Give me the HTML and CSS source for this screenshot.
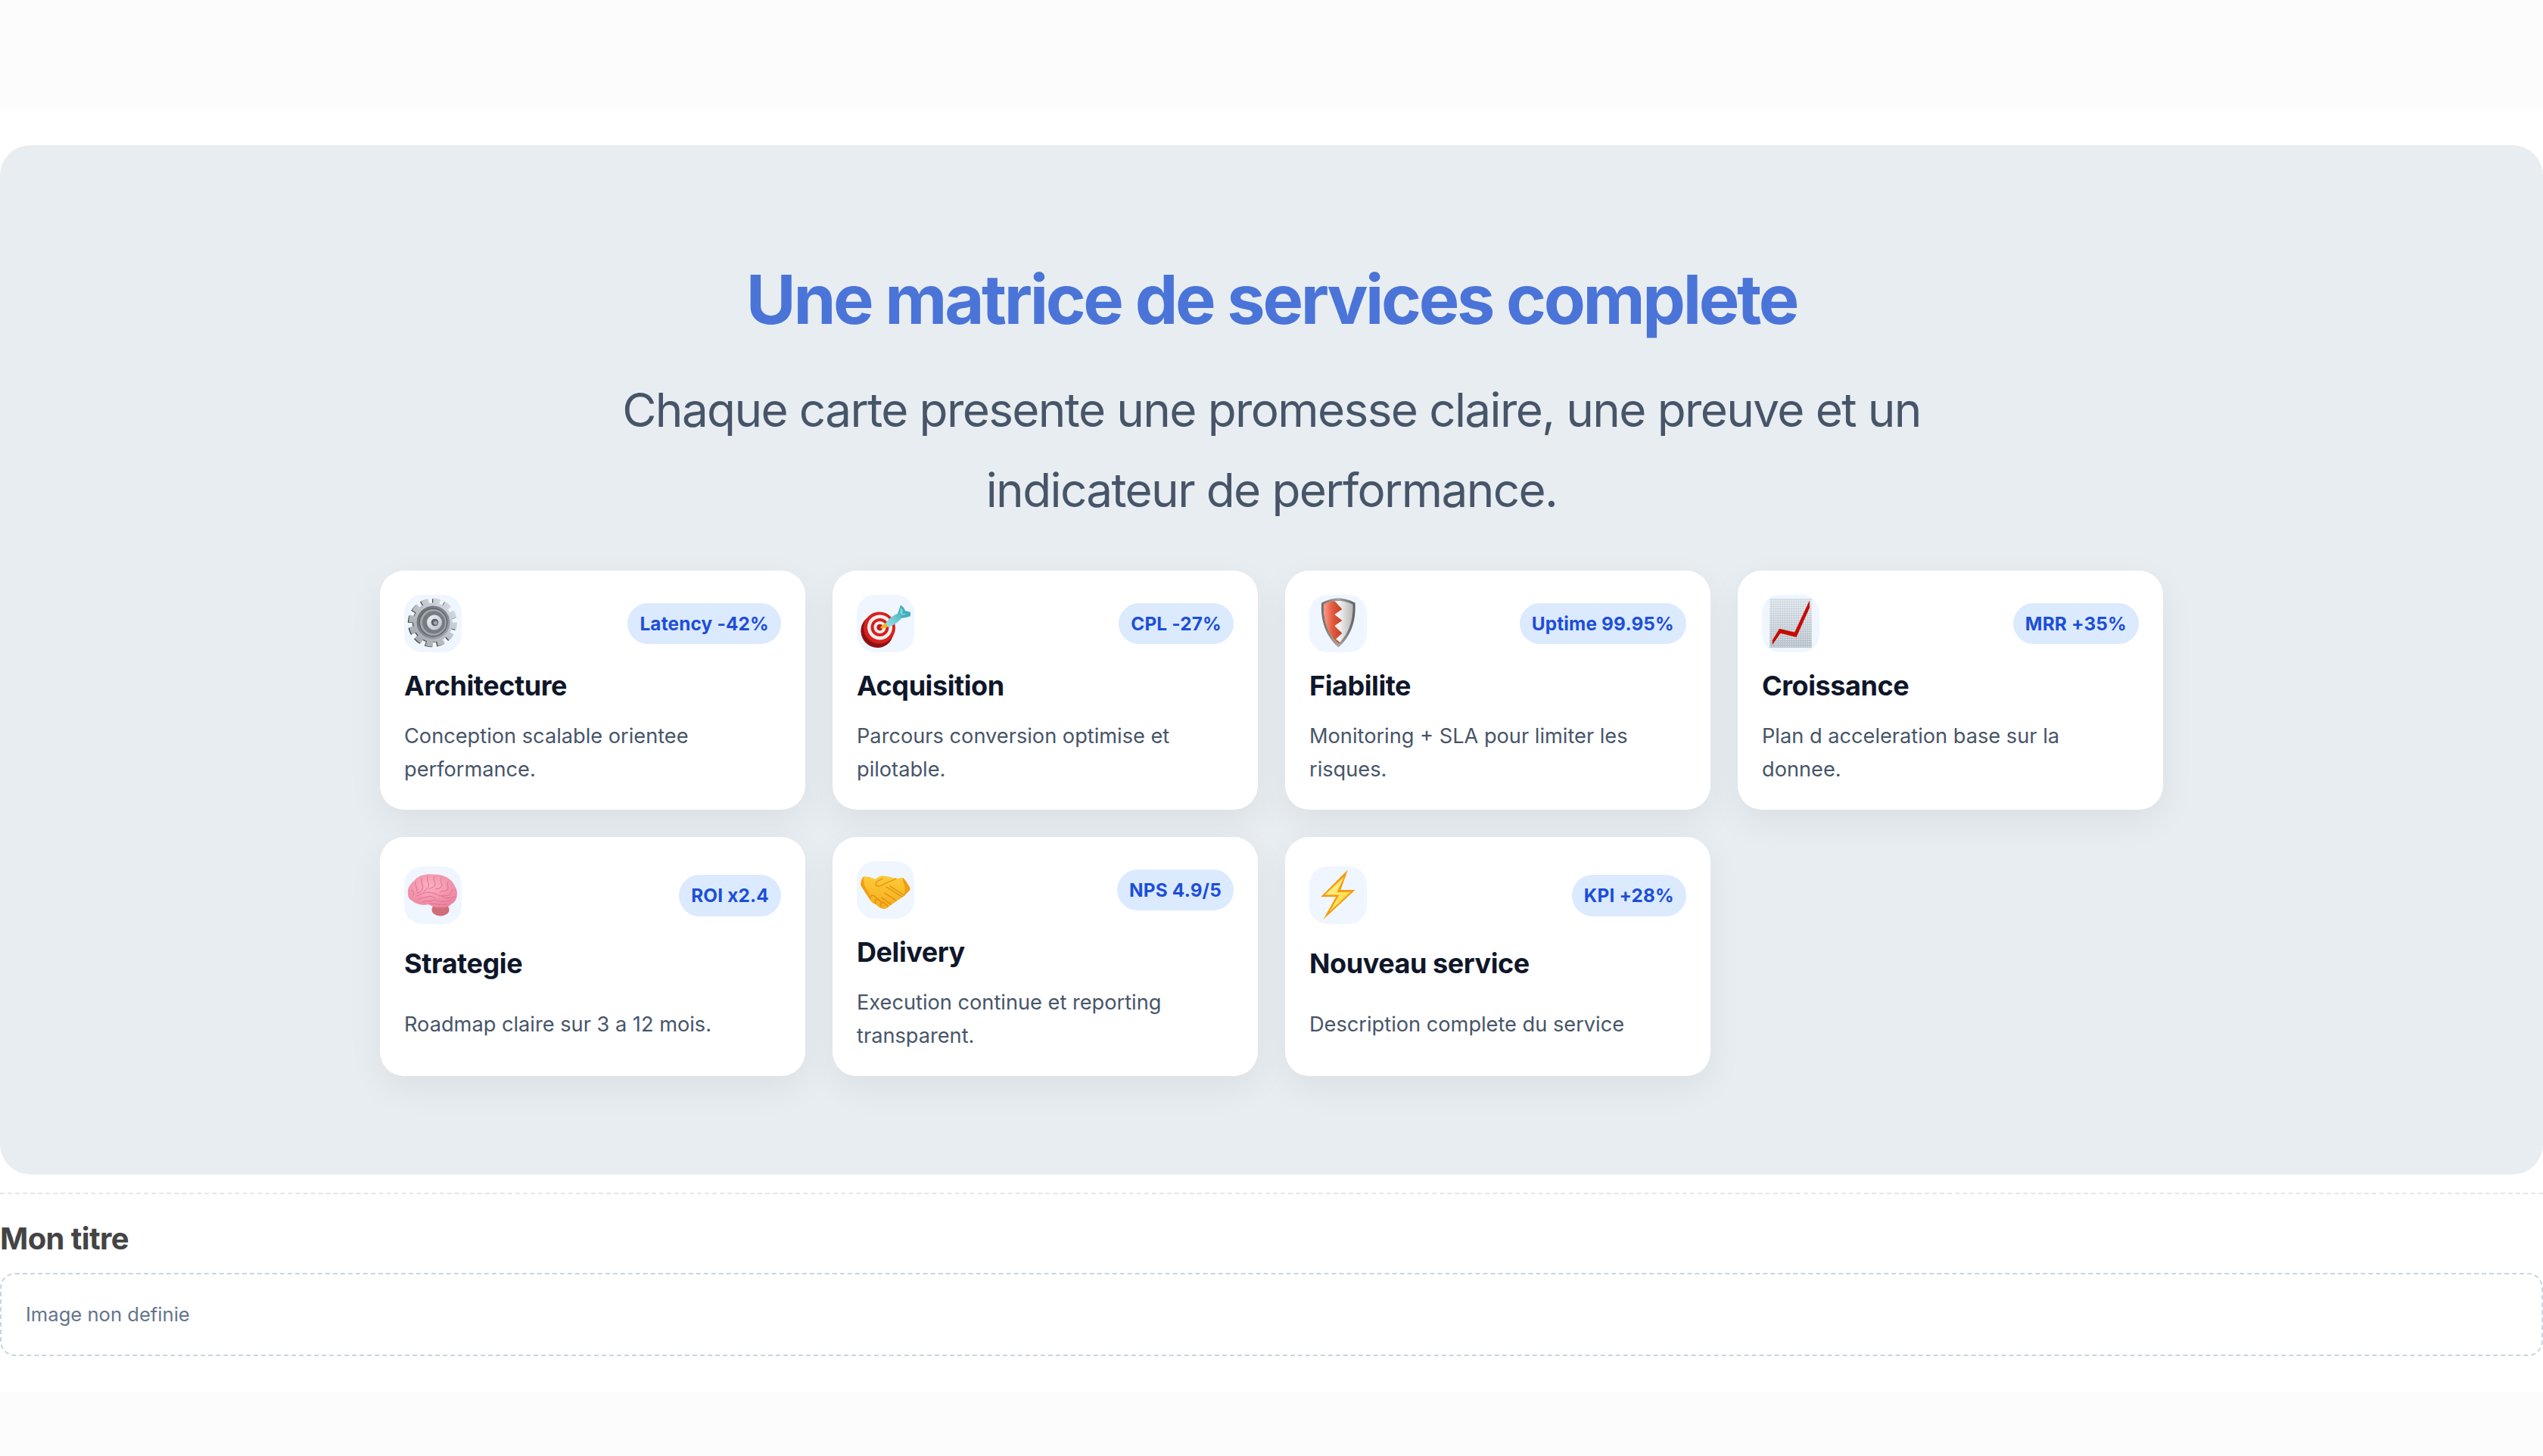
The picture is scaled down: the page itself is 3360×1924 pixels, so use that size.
FILE: index.html
```html
<!DOCTYPE html>
<html lang="fr">
<head>
<meta charset="utf-8">
<title>Une matrice de services complete</title>
<link rel="stylesheet" href="styles.css">
</head>
<body>
<header class="topbar"></header>
<main class="main">
  <section class="hero">
    <h1 class="hero-title">Une matrice de services complete</h1>
    <p class="hero-sub">Chaque carte presente une promesse claire, une preuve et un indicateur de performance.</p>
    <div class="grid">
      <article class="card">
        <div class="card-head">
          <span class="icon"><svg viewBox="0 0 76 76" width="76" height="76">
            <defs>
              <linearGradient id="gearBody" x1="1" y1="0" x2="0" y2="1"><stop offset="0" stop-color="#d8dee3"/><stop offset="1" stop-color="#9fa7ae"/></linearGradient>
              <linearGradient id="gearRing" x1="0" y1="0" x2="1" y2="1"><stop offset="0" stop-color="#666b71"/><stop offset="1" stop-color="#a3a8ad"/></linearGradient>
              <linearGradient id="gearHub" x1="0" y1="0" x2="1" y2="1"><stop offset="0" stop-color="#f2f5f8"/><stop offset="1" stop-color="#b5c0ca"/></linearGradient>
            </defs>
            <g transform="translate(-1.2 .7)"><circle cx="38" cy="36.5" r="26" fill="#4f473e"/><circle cx="38" cy="36.5" r="28" fill="none" stroke="#4f473e" stroke-width="8" stroke-dasharray="8.8 5.86"/></g>
            <circle cx="38" cy="36.5" r="26" fill="url(#gearBody)"/>
            <circle cx="38" cy="36.5" r="28" fill="none" stroke="url(#gearBody)" stroke-width="8" stroke-dasharray="8.8 5.86"/>
            <circle cx="38.5" cy="36.5" r="22" fill="url(#gearRing)"/>
            <circle cx="38.5" cy="36.5" r="19" fill="#5f6469"/>
            <circle cx="38.5" cy="36.5" r="17.5" fill="#a1a6ab"/>
            <circle cx="39" cy="36.5" r="15" fill="#777c81"/>
            <circle cx="40" cy="36.5" r="10" fill="url(#gearHub)"/>
            <circle cx="40.5" cy="36.5" r="4.8" fill="#5c6166"/>
            <circle cx="41.5" cy="37" r="2.6" fill="#a0a5aa"/>
          </svg></span>
          <span class="pill">Latency -42%</span>
        </div>
        <h3 class="card-title">Architecture</h3>
        <p class="card-text">Conception scalable orientee performance.</p>
      </article>
      <article class="card">
        <div class="card-head">
          <span class="icon"><svg viewBox="0 0 76 76" width="76" height="76">
            <defs>
              <linearGradient id="dartBody" x1="0" y1="1" x2="1" y2="0"><stop offset="0" stop-color="#9ce6ea"/><stop offset="1" stop-color="#4cb5c0"/></linearGradient>
            </defs>
            <ellipse cx="27" cy="48" rx="21.5" ry="22" fill="#8f0f12" transform="rotate(-25 27 48)"/>
            <circle cx="30" cy="43.5" r="21" fill="#d8201f"/>
            <circle cx="30.5" cy="43" r="16.5" fill="#f4f1ee"/>
            <circle cx="30.5" cy="43" r="12" fill="#d8201f"/>
            <circle cx="30.5" cy="43" r="8" fill="#f4f1ee"/>
            <circle cx="30.5" cy="43" r="4.2" fill="#c4171a"/>
            <path d="M31 43 L38 37 L42 42 L33 45 Z" fill="#f2b515"/>
            <path d="M54 25 L58 13.5 C61 15 63 18 64 21 L71 23 L71 28 C67 30 62 30 58 31 Z" fill="#43aebb"/>
            <path d="M38 38 C42 31 50 26 56 24 C59 26 60 29 59 31 C54 37 47 41 42 43 Z" fill="url(#dartBody)"/>
            <path d="M58 17 L61 20 L60 25 L67 25 L60 27 L57 24 Z" fill="#7fd5dc"/>
          </svg></span>
          <span class="pill">CPL -27%</span>
        </div>
        <h3 class="card-title">Acquisition</h3>
        <p class="card-text">Parcours conversion optimise et pilotable.</p>
      </article>
      <article class="card">
        <div class="card-head">
          <span class="icon"><svg viewBox="0 0 76 76" width="76" height="76">
            <defs>
              <linearGradient id="shieldEdge" x1="0" y1="0" x2="1" y2="0"><stop offset="0" stop-color="#6e6e6e"/><stop offset=".5" stop-color="#a5a5a5"/><stop offset="1" stop-color="#5f5f5f"/></linearGradient>
              <linearGradient id="shieldRed" x1="0" y1="0" x2="1" y2="0"><stop offset="0" stop-color="#ff9a87"/><stop offset=".5" stop-color="#e0583c"/><stop offset="1" stop-color="#bf4128"/></linearGradient>
              <linearGradient id="shieldLight" x1="0" y1="0" x2="1" y2="0"><stop offset="0" stop-color="#c9c9c9"/><stop offset=".5" stop-color="#f5f5f5"/><stop offset="1" stop-color="#b7b7b7"/></linearGradient>
            </defs>
            <path d="M38.3 4.5 C45 4.5 54 7 60.5 10.8 C61.5 30 58 52 38.3 69.5 C19 52 15 30 16 10.8 C22.5 7 31 4.5 38.3 4.5 Z" fill="url(#shieldEdge)"/>
            <path d="M38.3 8 C45 8 52 9.8 57.5 12.8 C58 30 54.5 49 38.3 64.5 C22 49 18.5 30 19 12.8 C24.5 9.8 31 8 38.3 8 Z" fill="url(#shieldLight)"/>
            <path d="M33.5 8.3 L43.3 19 L33.3 26 L43.3 34 L33.3 41 L43.3 50.7 L35 58.5 L40.5 63 L38.3 64.5 C22 49 18.5 30 19 12.8 C23.5 10.3 28.5 8.8 33.5 8.3 Z" fill="url(#shieldRed)"/>
          </svg></span>
          <span class="pill">Uptime 99.95%</span>
        </div>
        <h3 class="card-title">Fiabilite</h3>
        <p class="card-text">Monitoring + SLA pour limiter les risques.</p>
      </article>
      <article class="card">
        <div class="card-head">
          <span class="icon"><svg viewBox="0 0 76 76" width="76" height="76">
            <defs>
              <pattern id="chartGrid" width="3" height="3" patternUnits="userSpaceOnUse"><rect width="3" height="3" fill="#e9edf1"/><path d="M0 .5H3M.5 0V3" stroke="#bccbd8" stroke-width="1"/></pattern>
              <linearGradient id="chartFade" x1="0" y1="0" x2="0" y2="1"><stop offset="0" stop-color="#fff" stop-opacity=".25"/><stop offset="1" stop-color="#8f979e" stop-opacity=".3"/></linearGradient>
            </defs>
            <rect x="10" y="4.7" width="56" height="65" fill="url(#chartGrid)"/>
            <rect x="10" y="4.7" width="56" height="65" fill="url(#chartFade)"/>
            <path d="M13.8 60 L23 44.8 L43.2 49.5 L62.8 7.5 L63 17 L45.5 56 L24.5 50.8 L13.8 66 Z" fill="#c70b00"/>
          </svg></span>
          <span class="pill">MRR +35%</span>
        </div>
        <h3 class="card-title">Croissance</h3>
        <p class="card-text">Plan d acceleration base sur la donnee.</p>
      </article>
      <article class="card">
        <div class="card-head">
          <span class="icon"><svg viewBox="0 0 76 76" width="76" height="76">
            <defs>
              <radialGradient id="brainFill" cx=".45" cy=".35" r=".75"><stop offset="0" stop-color="#fbb0c2"/><stop offset="1" stop-color="#ec7f9b"/></radialGradient>
            </defs>
            <ellipse cx="48" cy="57" rx="11.5" ry="8.5" fill="#cf6d78"/>
            <path d="M5 35 C4 28 9 22 14 18 C19 11 30 9.5 38 10.5 C50 9.5 63 15 67 26 C72 33 71 46 62 50 C58 54 53 55 49 54 C44 55 38 54 33 50 C26 52 16 50 10 45 C6 43 5 39 5 35 Z" fill="url(#brainFill)"/>
            <g fill="none" stroke="#e06f8f" stroke-width="1" stroke-linecap="round">
              <path d="M15 20 C14 26 18 28 17 33"/>
              <path d="M23 15 C21 21 26 24 24 30 C23 33 20 35 17 35"/>
              <path d="M31 13 C29 19 34 22 32 27 C31 30 28 31 26 33"/>
              <path d="M40 13 C37 18 43 21 40 26 C38 28 35 28 33 30"/>
              <path d="M49 15 C46 20 52 23 49 27 C47 30 43 29 41 30"/>
              <path d="M58 20 C55 24 60 27 57 31 C54 33 50 32 47 34"/>
              <path d="M65 30 C61 32 63 37 59 38 C55 39 53 37 49 39"/>
              <path d="M17 39 C23 35 32 33 38 35 C44 37 48 39 54 41 C58 42 62 42 66 40"/>
              <path d="M18 44 C22 40 28 42 31 40 C34 38 38 41 41 42"/>
              <path d="M24 47 C29 44 33 47 37 45 C42 43 46 47 51 46 C55 46 58 47 61 45"/>
              <path d="M33 50 C38 48 42 50 46 50 C50 50 53 51 56 50"/>
              <path d="M9 32 C12 31 14 35 12 38"/>
            </g>
          </svg></span>
          <span class="pill">ROI x2.4</span>
        </div>
        <h3 class="card-title">Strategie</h3>
        <p class="card-text">Roadmap claire sur 3 a 12 mois.</p>
      </article>
      <article class="card">
        <div class="card-head">
          <span class="icon"><svg viewBox="0 0 76 76" width="76" height="76">
            <defs>
              <linearGradient id="handFill" x1="0" y1="0" x2="0" y2="1"><stop offset="0" stop-color="#fccb3a"/><stop offset="1" stop-color="#f6ab1c"/></linearGradient>
            </defs>
            <path d="M5.4 32 C5 27 7 22 9.6 20.3 C14 20 20 22 25 23.7 C28 21 31 19.3 34.4 19.3 C40 19.5 46 21.5 51.7 22.7 C54 23 58 22 61.2 22 C65 26 69 32 70.8 37 C68 41 64 44 61.2 46.9 C55 51 49 55 44 58.7 C41 62 37 63.5 34.4 62.7 C31 62 28 60 24.9 57 C21 56 18 53 17.2 50.3 C13 44 9 38 5.4 32 Z" fill="url(#handFill)"/>
            <g fill="none" stroke="#dc8f0e" stroke-width="1.3" stroke-linecap="round">
              <path d="M52 23 C46 26 40 28 33 32 C29 34 25 33 25 30 C25 27 29 25 34 23"/>
              <path d="M39 34 L60 47"/>
              <path d="M44 33 C50 37 56 41 63 45"/>
              <path d="M37 42 L52 52"/>
              <path d="M33 48 L45 57"/>
              <path d="M25 56 C23 52 26 49 29 51 L34 55"/>
              <path d="M32 60 C30 56 33 53 36 55 L41 59"/>
              <path d="M18 50 C17 46 20 44 23 46 L29 51"/>
            </g>
            <path d="M5.4 32 C5 27 7 22 9.6 20.3 C9 25 9 29 11 34 L17.2 44 L17.2 50.3 C13 44 9 38 5.4 32 Z" fill="#f39d12"/>
            <path d="M61.2 22 C65 26 69 32 70.8 37 C68 41 64 44 61.2 46.9 C63 42 65 38 63 32 C62 28 60 25 61.2 22 Z" fill="#f39d12"/>
          </svg></span>
          <span class="pill">NPS 4.9/5</span>
        </div>
        <h3 class="card-title">Delivery</h3>
        <p class="card-text">Execution continue et reporting transparent.</p>
      </article>
      <article class="card">
        <div class="card-head">
          <span class="icon"><svg viewBox="0 0 76 76" width="76" height="76">
            <defs>
              <linearGradient id="zapFill" x1="0" y1="0" x2="1" y2="1"><stop offset="0" stop-color="#fff8b0"/><stop offset="1" stop-color="#ffd21f"/></linearGradient>
            </defs>
            <path d="M50.9 4.3 L41.3 31 L60.5 31 L18.4 70 L35.2 40 L15.3 40 Z" fill="#f79a0c"/>
            <path d="M46 13.5 L36.5 34 L54.5 33.5 L26.5 60 L39.5 37.5 L20.5 37.5 Z" fill="url(#zapFill)"/>
          </svg></span>
          <span class="pill">KPI +28%</span>
        </div>
        <h3 class="card-title">Nouveau service</h3>
        <p class="card-text">Description complete du service</p>
      </article>
    </div>
  </section>
  <section class="media-block">
    <h2 class="media-title">Mon titre</h2>
    <div class="media-empty">Image non definie</div>
  </section>
</main>
<footer class="bottombar"></footer>
</body>
</html>
```

FILE: styles.css
```css
* { box-sizing: border-box; }
html, body { margin: 0; padding: 0; }
body {
  background: #ffffff;
  color: #0f172a;
  font-family: "Inter", "Liberation Sans", sans-serif;
  line-height: 1.6;
  min-height: 1924px;
  display: flex;
  flex-direction: column;
}
.topbar { height: 145px; background: #fcfcfc; }
.main { padding-top: 47px; flex: 0 0 auto; }
.hero {
  background: #e8edf1;
  border-radius: 40px;
  padding: 150px 0 130px;
  text-align: center;
}
.hero-title {
  margin: 0 0 39px;
  font-size: 90px;
  line-height: 108px;
  font-weight: 750;
  letter-spacing: -0.037em;
  color: #4a74d8;
}
.hero-sub {
  margin: 0 auto 53px;
  max-width: 1800px;
  font-size: 62px;
  line-height: 106px;
  font-weight: 400;
  letter-spacing: -0.026em;
  color: #475569;
}
.grid {
  max-width: 2356px;
  margin: 0 auto;
  display: grid;
  grid-template-columns: repeat(4, 1fr);
  gap: 36px;
  text-align: left;
}
.card {
  display: grid;
  gap: 20px;
  padding: 32px;
  background: #ffffff;
  border-radius: 32px;
  box-shadow: 0 16px 48px rgba(15, 23, 42, 0.06);
}
.card-head {
  display: flex;
  align-items: center;
  justify-content: space-between;
}
.icon {
  width: 76px;
  height: 76px;
  border-radius: 24px;
  background: #eff6ff;
  display: block;
  flex: none;
}
.icon svg { display: block; }
.pill {
  padding: 8px 16px;
  border-radius: 999px;
  background: #dbeafe;
  color: #1d4ed8;
  font-size: 24.32px;
  font-weight: 700;
  line-height: 38.9px;
  letter-spacing: 0.008em;
}
.card-title {
  margin: 0;
  font-size: 36px;
  line-height: 49px;
  font-weight: 700;
  letter-spacing: -0.012em;
  color: #0f172a;
}
.card-text {
  margin: 0;
  font-size: 27.2px;
  line-height: 43.5px;
  color: #475569;
}
.media-block {
  margin-top: 24px;
  border-top: 2px dashed #e2e8f0;
}
.media-title {
  margin: 33px 0 19px;
  font-size: 40px;
  line-height: 52px;
  font-weight: 700;
  letter-spacing: -0.015em;
  color: #444444;
}
.media-empty {
  padding: 32px;
  border: 2px dashed #cbd5e1;
  border-radius: 20px;
  font-size: 25.6px;
  line-height: 42px;
  color: #64748b;
}
.bottombar {
  margin-top: 48px;
  flex: 1 0 auto;
  background: #fcfcfc;
}
```
